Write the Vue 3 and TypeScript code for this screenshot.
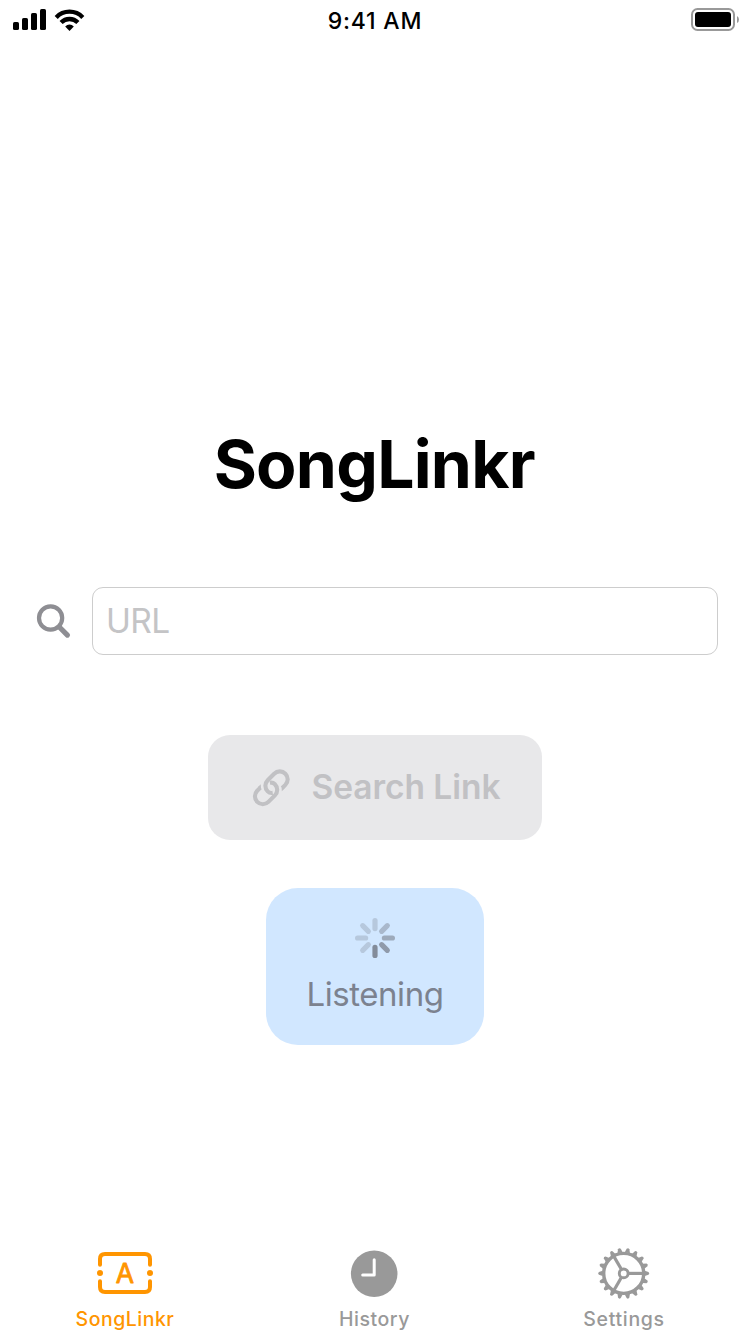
<script setup lang="ts">
import { ref } from 'vue'

type TabId = 'songlinkr' | 'history' | 'settings'

const tabs: { id: TabId; label: string }[] = [
  { id: 'songlinkr', label: 'SongLinkr' },
  { id: 'history', label: 'History' },
  { id: 'settings', label: 'Settings' },
]

const activeTab = ref<TabId>('songlinkr')
const url = ref('')

const spinnerPetals = [
  { angle: 0, opacity: 0.2 },
  { angle: 45, opacity: 0.3 },
  { angle: 90, opacity: 0.4 },
  { angle: 135, opacity: 0.5 },
  { angle: 180, opacity: 0.6 },
  { angle: 225, opacity: 0.2 },
  { angle: 270, opacity: 0.2 },
  { angle: 315, opacity: 0.2 },
]

const gearTeeth = Array.from({ length: 18 }, (_, i) => i * 20)
const gearSpokes = [0, 120, 240]
</script>

<template>
  <div class="screen">
    <header class="status">
      <svg class="signal" width="80" height="30" viewBox="0 0 80 30">
        <rect x="1" y="17" width="6" height="8" rx="1.6" />
        <rect x="10" y="13" width="6" height="12" rx="1.6" />
        <rect x="19" y="8" width="6" height="17" rx="1.6" />
        <rect x="28" y="4" width="6" height="21" rx="1.6" />
        <g fill="none" stroke="#000" stroke-width="4.3">
          <path d="M44.2 12.4 A18.4 18.4 0 0 1 70.8 12.4" />
          <path d="M49.1 17.6 A11.6 11.6 0 0 1 65.9 17.6" />
        </g>
        <path d="M53.2 21.4 A6 6 0 0 1 61.8 21.4 L57.5 26 Z" />
      </svg>
      <span class="time">9:41 AM</span>
      <svg class="battery" width="50" height="26" viewBox="0 0 50 26">
        <rect x="2" y="4" width="42" height="21" rx="5.5" fill="none" stroke="#999" stroke-width="2" />
        <rect x="5" y="7" width="36" height="15" rx="3" />
        <path d="M47 11 Q49 12 49 14.5 T47 18 Z" fill="#999" />
      </svg>
    </header>

    <main class="content">
      <h1 class="title">SongLinkr</h1>

      <div class="search-row">
        <svg class="magnifier" width="36" height="36" viewBox="0 0 36 36">
          <circle cx="14.6" cy="15" r="11.6" />
          <path d="M23.3 24 L31.4 32.1" class="handle" />
        </svg>
        <input v-model="url" class="url" type="text" placeholder="URL" />
      </div>

      <button class="search-button" disabled>
        <svg width="40" height="40" viewBox="-20 -20 40 40">
          <g transform="translate(0.3 -0.2) rotate(-45)" fill="none" stroke="currentColor" stroke-width="4.1">
            <path d="M7.6 7.9 H12 A7.9 7.9 0 0 0 12 -7.9 H2.8 A7.9 7.9 0 0 0 -5.1 0 Q-5.1 2.8 -2.6 4.6" />
            <path d="M-7.6 -7.9 H-12 A7.9 7.9 0 0 0 -12 7.9 H-2.8 A7.9 7.9 0 0 0 5.1 0 Q5.1 -2.8 2.6 -4.6" />
            <path d="M4.9 9.95 L8.6 5.85 V9.95 Z" fill="currentColor" stroke="none" />
            <path d="M-4.9 -9.95 L-8.6 -5.85 V-9.95 Z" fill="currentColor" stroke="none" />
          </g>
        </svg>
        <span>Search Link</span>
      </button>

      <button class="listen-button">
        <svg width="40" height="40" viewBox="-20 -20 40 40">
          <line
            v-for="petal in spinnerPetals"
            :key="petal.angle"
            x1="0"
            y1="-17.4"
            x2="0"
            y2="-9.4"
            stroke="#505058"
            stroke-width="5.2"
            stroke-linecap="round"
            :opacity="petal.opacity"
            :transform="`rotate(${petal.angle})`"
          />
        </svg>
        <span>Listening</span>
      </button>
    </main>

    <nav class="tabs">
      <button
        v-for="tab in tabs"
        :key="tab.id"
        class="tab"
        :class="{ active: tab.id === activeTab }"
        @click="activeTab = tab.id"
      >
        <svg v-if="tab.id === 'songlinkr'" width="60" height="60" viewBox="-30 -30 60 60">
          <g fill="none" stroke="currentColor" stroke-width="4" stroke-linecap="round">
            <path d="M-25 -8.2 V-14 Q-25 -19 -20 -19 H20 Q25 -19 25 -14 V-8.2" />
            <path d="M-25 8.2 V14 Q-25 19 -20 19 H20 Q25 19 25 14 V8.2" />
          </g>
          <circle cx="-25" cy="0" r="3" fill="currentColor" />
          <circle cx="25" cy="0" r="3" fill="currentColor" />
          <text class="badge-letter" x="0" y="9.8" text-anchor="middle">A</text>
        </svg>
        <svg v-else-if="tab.id === 'history'" width="60" height="60" viewBox="-30 -30 60 60">
          <circle cx="-0.8" cy="0.7" r="23.3" fill="currentColor" />
          <path
            d="M-0.8 -13.3 V2 H-12.3"
            fill="none"
            stroke="#fff"
            stroke-width="3"
            stroke-linecap="round"
            stroke-linejoin="round"
          />
        </svg>
        <svg v-else width="60" height="60" viewBox="-30 -30 60 60">
          <g transform="translate(-1.3 0.4)" fill="none" stroke="currentColor">
            <circle r="20" stroke-width="3.4" />
            <circle r="4.4" stroke-width="2.9" />
            <path
              v-for="angle in gearSpokes"
              :key="`spoke-${angle}`"
              d="M5 0 H20"
              stroke-width="3.2"
              :transform="`rotate(${angle})`"
            />
            <path
              v-for="angle in gearTeeth"
              :key="`tooth-${angle}`"
              d="M21 -2.6 L24.8 -1.4 Q26.4 0 24.8 1.4 L21 2.6 Z"
              fill="currentColor"
              stroke="none"
              :transform="`rotate(${angle})`"
            />
          </g>
        </svg>
        <span class="label" :class="tab.id">{{ tab.label }}</span>
      </button>
    </nav>
  </div>
</template>

<style>
body {
  margin: 0;
  background: #fff;
}
</style>

<style scoped>
.screen {
  width: 750px;
  height: 1334px;
  display: flex;
  flex-direction: column;
  overflow: hidden;
  background: #fff;
  color: #000;
  font-family: Inter, 'Liberation Sans', sans-serif;
}

button,
input {
  box-sizing: border-box;
  margin: 0;
  padding: 0;
  border: 0;
  background: none;
  font: inherit;
}

svg {
  display: block;
  flex: none;
}

.status {
  flex: none;
  height: 40px;
  display: grid;
  grid-template-columns: 1fr auto 1fr;
  align-items: start;
}

.signal {
  margin: 5px 0 0 12px;
}

.time {
  padding-top: 6px;
  font-size: 23px;
  line-height: 30px;
  font-weight: 500;
  letter-spacing: 0.8px;
}

.battery {
  margin: 5px 10px 0 0;
  justify-self: end;
}

.content {
  flex: 1;
  display: flex;
  flex-direction: column;
  align-items: center;
}

.title {
  margin: 384px 1.5px 0 0;
  font-size: 66px;
  line-height: 80px;
  font-weight: 700;
  letter-spacing: -0.75px;
}

.search-row {
  align-self: stretch;
  display: flex;
  align-items: center;
  gap: 20px;
  margin: 83px 32px 0 36px;
}

.magnifier {
  fill: none;
  stroke: #8e8e93;
  stroke-width: 4.2;
}

.handle {
  stroke-width: 5.2;
  stroke-linecap: round;
}

.url {
  flex: 1;
  height: 68px;
  padding: 0 13px;
  border: 1px solid #cdcdcd;
  border-radius: 11px;
  font-size: 33.5px;
  letter-spacing: -0.6px;
}

.url::placeholder {
  color: #c4c4c6;
  opacity: 1;
}

.search-button {
  width: 334px;
  height: 105px;
  margin-top: 80px;
  display: flex;
  align-items: center;
  padding-left: 43px;
  gap: 20.5px;
  border-radius: 22px;
  background: #e8e8ea;
  color: #c1c1c4;
  font-size: 33.5px;
  line-height: 40px;
  font-weight: 600;
  white-space: nowrap;
}

.search-button span {
  margin-top: -1px;
  letter-spacing: -0.05px;
}

.listen-button {
  width: 218px;
  height: 157px;
  margin-top: 48px;
  padding-top: 30px;
  display: flex;
  flex-direction: column;
  align-items: center;
  border-radius: 32px;
  background: #d1e7ff;
  color: #7c828f;
  font-size: 33px;
  line-height: 40px;
  letter-spacing: -0.45px;
}

.listen-button span {
  margin-top: 15.5px;
}

.tabs {
  flex: none;
  height: 98px;
  display: grid;
  grid-template-columns: 249px 251px 250px;
  padding-top: 7px;
  box-sizing: border-box;
}

.tab {
  display: flex;
  flex-direction: column;
  align-items: center;
  color: #999;
}

.tab.active {
  color: #ff9500;
}

.label {
  margin-top: 4px;
  font-size: 19.5px;
  line-height: 24px;
  font-weight: 500;
  letter-spacing: 0.55px;
}

.label.songlinkr {
  margin-left: 1px;
  letter-spacing: 0.5px;
}

.label.settings {
  margin-right: 2px;
  letter-spacing: 0.7px;
}

.badge-letter {
  fill: currentColor;
  stroke: currentColor;
  stroke-width: 0.8px;
  stroke-linejoin: round;
  font-size: 26.5px;
  font-weight: 400;
}
</style>
